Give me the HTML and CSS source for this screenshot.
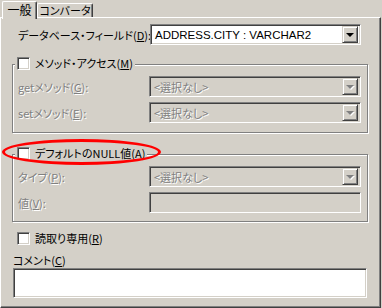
FILE: index.html
```html
<!DOCTYPE html>
<html>

<head>
    <title>プロパティ</title>
    <link rel="stylesheet" href="styles.css">
</head>

<body>
    <div class="tabs">
        <div class="tab active">一般</div>
        <div class="tab">コンバータ</div>
    </div>

    <div class="panel">
        <!-- field -->
        <div class="row first">
            <label class="label wide">データベース・フィールド(<u>D</u>):</label>
            <div class="combo main">
                <span class="value">ADDRESS.CITY : VARCHAR2</span>
                <span class="drop"><i class="arrow"></i></span>
            </div>
        </div>

        <!-- method access -->
        <div class="group access">
            <div class="legend">
                <span class="check"></span>
                <span class="text">メソッド・アクセス(<u>M</u>)</span>
            </div>
            <div class="row">
                <label class="label disabled">getメソッド(<u>G</u>):</label>
                <div class="combo off">
                    <span class="value">&lt;選択なし&gt;</span>
                    <span class="drop"><i class="arrow"></i></span>
                </div>
            </div>
            <div class="row">
                <label class="label disabled">setメソッド(<u>E</u>):</label>
                <div class="combo off">
                    <span class="value">&lt;選択なし&gt;</span>
                    <span class="drop"><i class="arrow"></i></span>
                </div>
            </div>
        </div>

        <!-- default null -->
        <div class="group nullvalue">
            <div class="legend">
                <span class="check"></span>
                <span class="text">デフォルトのNULL値(<u>A</u>)</span>
            </div>
            <div class="row">
                <label class="label disabled">タイプ(<u>P</u>):</label>
                <div class="combo off">
                    <span class="value">&lt;選択なし&gt;</span>
                    <span class="drop"><i class="arrow"></i></span>
                </div>
            </div>
            <div class="row">
                <label class="label disabled">値(<u>V</u>):</label>
                <div class="textbox off"></div>
            </div>
        </div>

        <div class="option readonly">
            <span class="check"></span>
            <span class="text">読取り専用(<u>R</u>)</span>
        </div>

        <div class="comment-label">コメント(<u>C</u>)</div>
        <div class="textbox comment"></div>
    </div>

    <!-- red highlight drawn over the dialog -->
    <div class="mark"></div>
</body>

</html>
```

FILE: styles.css
```css
body {
    margin: 0;
    width: 382px;
    height: 308px;
    overflow: hidden;
    position: relative;
    background: #d4d0c8;
    font-family: "Noto Sans CJK JP", "Liberation Sans", sans-serif;
    font-size: 11px;
    line-height: 14px;
    font-feature-settings: "palt";
    color: #000;
}

u {
    text-decoration: underline;
    text-underline-offset: 1px;
}

/* tabs */
.tabs {
    display: flex;
    align-items: flex-end;
    height: 17px;
    padding-left: 2px;
}

.tab {
    box-sizing: border-box;
    height: 14px;
    width: 56px;
    border-top: 1px solid #fff;
    border-left: 1px solid #fff;
    border-right: 1px solid #404040;
    box-shadow: inset -1px 0 #808080;
    border-radius: 2px 2px 0 0;
    line-height: 13px;
    text-align: center;
    white-space: nowrap;
}

.tab.active {
    position: relative;
    z-index: 1;
    height: 18px;
    width: 35px;
    margin-bottom: -2px;
    background: #d4d0c8;
    line-height: 15px;
    font-size: 12px;
}

/* main frame */
.panel {
    box-sizing: border-box;
    width: 381px;
    height: 291px;
    padding: 0 0 0 11px;
    border-top: 1px solid #fff;
    border-left: 1px solid #fff;
    border-right: 1px solid #404040;
    border-bottom: 1px solid #404040;
    box-shadow: inset -1px -1px #808080;
}

.row {
    display: flex;
    align-items: center;
    height: 21px;
    margin-top: 5px;
}

.row.first {
    margin-top: 6px;
}

.label {
    flex: none;
    width: 131px;
    padding-left: 5px;
    white-space: nowrap;
}

.label.wide {
    width: 132px;
    padding-left: 6px;
}

.disabled,
.combo.off .value {
    color: #808080;
    text-shadow: 1px 1px 0 #fff;
}

/* combo box */
.combo,
.textbox {
    box-sizing: border-box;
    display: flex;
    align-items: center;
    flex: none;
    width: 212px;
    height: 21px;
    padding: 2px;
    background: #fff;
    border-top: 1px solid #808080;
    border-left: 1px solid #808080;
    border-bottom: 1px solid #fff;
    border-right: 1px solid #fff;
    box-shadow: inset 1px 1px #404040, inset -1px -1px #d4d0c8;
}

.combo.main {
    width: 211px;
}

.combo.off,
.textbox.off {
    background: #d4d0c8;
}

.value {
    flex: 1;
    padding-left: 2px;
    white-space: nowrap;
    font-family: "Liberation Sans", "Noto Sans CJK JP", sans-serif;
    font-size: 11.5px;
}

.combo.off .value {
    font-family: "Noto Sans CJK JP", sans-serif;
    font-size: 11px;
}

.drop {
    box-sizing: border-box;
    display: flex;
    align-items: center;
    justify-content: center;
    width: 16px;
    height: 17px;
    background: #d4d0c8;
    border-top: 1px solid #d4d0c8;
    border-left: 1px solid #d4d0c8;
    border-right: 1px solid #404040;
    border-bottom: 1px solid #404040;
    box-shadow: inset 1px 1px #fff, inset -1px -1px #808080;
}

.arrow {
    width: 0;
    height: 0;
    border-left: 4px solid transparent;
    border-right: 4px solid transparent;
    border-top: 4px solid #000;
    margin-top: 1px;
}

.combo.off .arrow {
    border-top-color: #808080;
    filter: drop-shadow(1px 1px 0 #fff);
}

/* group boxes */
.group {
    box-sizing: border-box;
    width: 356px;
    border: 1px solid #808080;
    box-shadow: inset 1px 1px #fff, 1px 1px #fff;
}

.group.access {
    margin-top: 19px;
    height: 69px;
}

.group.nullvalue {
    margin-top: 21px;
    height: 68px;
}

.legend {
    display: flex;
    align-items: center;
    gap: 5px;
    width: max-content;
    height: 13px;
    margin: -8px 0 0 2px;
    padding: 0 2px;
    background: #d4d0c8;
    white-space: nowrap;
}

.legend + .row {
    margin-top: 6px;
}

.text {
    padding-bottom: 2px;
}

.check {
    box-sizing: border-box;
    flex: none;
    width: 13px;
    height: 13px;
    background: #fff;
    border-top: 1px solid #808080;
    border-left: 1px solid #808080;
    border-bottom: 1px solid #fff;
    border-right: 1px solid #fff;
    box-shadow: inset 1px 1px #404040, inset -1px -1px #d4d0c8;
}

.option {
    display: flex;
    align-items: center;
    gap: 5px;
    height: 13px;
    margin: 10px 0 0 5px;
}

.comment-label {
    margin: 8px 0 0 1px;
    height: 15px;
}

.textbox.comment {
    width: 354px;
    height: 30px;
    margin-left: 1px;
}

/* annotation */
.mark {
    position: absolute;
    left: 2px;
    top: 139px;
    width: 153px;
    height: 20px;
    border: 3px solid #f00;
    border-radius: 50%;
}
```
